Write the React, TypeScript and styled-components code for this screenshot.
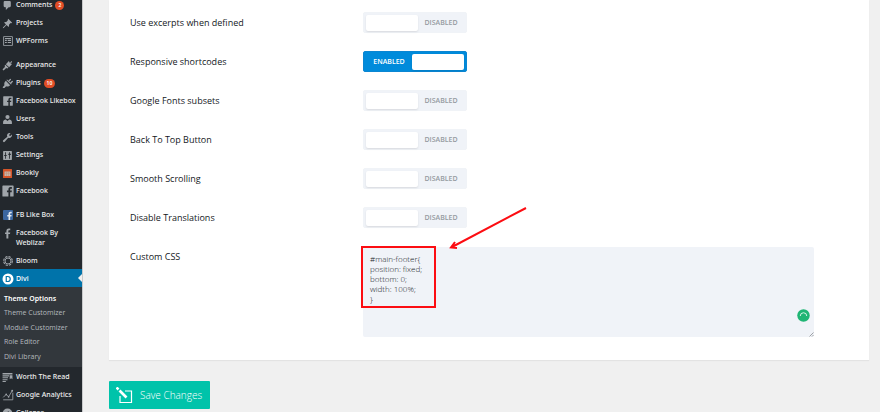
import React from "react";
import styled, { createGlobalStyle, css } from "styled-components";

const Global = createGlobalStyle`
  *, *::before, *::after { box-sizing: border-box; }
  body { margin: 0; background: #f0f0f0; font-family: "Open Sans", "Noto Sans", sans-serif; overflow: hidden; }
  button, textarea { font-family: inherit; }
`;

const Shell = styled.div`
  display: flex;
  height: 100vh;
  overflow: hidden;
`;

const Sidebar = styled.nav`
  flex: 0 0 83px;
  background: #23282d;
  border-right: 1px solid #c9cacb;
  overflow: hidden;
`;

const Menu = styled.ul`
  list-style: none;
  margin: -5px 0 0;
  padding: 0;
`;

const MenuItem = styled.li<{ $gap?: number }>`
  margin-top: ${(p) => p.$gap ?? 0}px;
`;

const MenuLink = styled.a<{ $active?: boolean }>`
  position: relative;
  display: flex;
  align-items: flex-start;
  gap: 2px;
  min-height: 18px;
  padding: 5px 0 3px 1px;
  font-family: "Noto Sans", sans-serif;
  font-size: 7px;
  line-height: 10px;
  font-weight: 500;
  white-space: nowrap;
  text-decoration: none;
  color: #eee;
  ${(p) =>
    p.$active &&
    css`
      background: #0073aa;
      color: #fff;
      &::after {
        content: "";
        position: absolute;
        right: 0;
        top: 5px;
        border: 4px solid transparent;
        border-left: 0;
        border-right-color: #f0f0f0;
      }
    `}
`;

const IconBox = styled.span`
  flex: 0 0 13px;
  min-width: 0;
  height: 10px;
  display: flex;
  align-items: center;
  justify-content: center;
  color: #a0a5aa;
  svg { flex: none; }
`;

const Label = styled.span<{ $wrap?: boolean }>`
  ${(p) => p.$wrap && css`white-space: normal; width: 50px;`}
`;

const Badge = styled.span`
  align-self: center;
  display: flex;
  align-items: center;
  justify-content: center;
  min-width: 9px;
  height: 9px;
  margin-left: 1px;
  padding: 0 3px;
  border-radius: 5px;
  background: #e14d26;
  color: #fff;
  font-size: 5px;
  line-height: 9px;
  font-weight: 600;
`;

const SubMenu = styled.ul`
  list-style: none;
  margin: 0;
  padding: 5px 0 3px 4px;
  height: 80px;
  background: #32373c;
  display: grid;
  grid-template-rows: repeat(5, 1fr);
`;

const SubLink = styled.a<{ $current?: boolean }>`
  display: block;
  font-family: ${(p) => (p.$current ? '"Noto Sans"' : '"Open Sans"')}, sans-serif;
  font-size: 7px;
  line-height: 14px;
  white-space: nowrap;
  text-decoration: none;
  color: ${(p) => (p.$current ? "#fff" : "#b4b9be")};
  font-weight: ${(p) => (p.$current ? 600 : 400)};
`;

const Main = styled.main`
  flex: 1;
  min-width: 0;
  padding: 0 11px 0 26px;
`;

const Panel = styled.section`
  background: #fff;
  padding: 3px 55px 23px 21px;
  box-shadow: 0 1px 1px #e3e3e3;
`;

const Field = styled.div`
  display: grid;
  grid-template-columns: 233px 1fr;
  height: 39px;
  align-items: center;
`;

const AreaField = styled(Field)`
  height: auto;
  align-items: start;
  padding-top: 10px;
`;

const FieldLabel = styled.label`
  font-size: 9px;
  line-height: 20px;
  font-weight: 500;
  color: #14181d;
`;

const Toggle = styled.button<{ $on: boolean }>`
  display: flex;
  flex-direction: ${(p) => (p.$on ? "row-reverse" : "row")};
  align-items: center;
  width: 104px;
  height: 21px;
  padding: 2px;
  border: 1px solid ${(p) => (p.$on ? "#0b86d2" : "#f0f3f7")};
  border-radius: 2px;
  background: ${(p) => (p.$on ? "#008bdb" : "#f0f3f8")};
  color: ${(p) => (p.$on ? "#fff" : "#969ba1")};
  font-size: 7px;
  font-weight: 600;
`;

const Knob = styled.span`
  width: 52px;
  height: 16px;
  border-radius: 2px;
  background: #fff;
  box-shadow: 0 1px 2px rgba(0, 0, 0, 0.1);
`;

const ToggleText = styled.span`
  flex: 1;
  text-align: center;
`;

const AreaWrap = styled.div`
  position: relative;
`;

const Area = styled.textarea`
  display: block;
  width: 100%;
  height: 90px;
  padding: 7px;
  border: 0;
  border-radius: 2px;
  outline: 0;
  resize: none;
  background: #f0f3f8;
  color: #14181d;
  font-family: "Open Sans", sans-serif;
  font-size: 8px;
  font-weight: 300;
  line-height: 10px;
`;

const Highlight = styled.div`
  position: absolute;
  left: -2px;
  top: -1px;
  width: 75px;
  height: 62px;
  border: 2px solid #fc0d12;
  pointer-events: none;
`;

const Arrow = styled.svg`
  position: absolute;
  left: 85px;
  top: -42px;
  pointer-events: none;
`;

const Checker = styled.svg`
  position: absolute;
  right: 4px;
  bottom: 15px;
`;

const Grip = styled.svg`
  position: absolute;
  right: 0;
  bottom: 0;
`;

const SaveButton = styled.button`
  display: flex;
  align-items: center;
  gap: 7px;
  height: 28px;
  margin-top: 21px;
  padding: 0 8px 0 7px;
  border: 0;
  border-radius: 1px;
  background: #00c3aa;
  color: #fff;
  font-size: 10px;
  line-height: 14px;
  font-weight: 300;
`;

const S = ({ children, size = 11 }: { children: React.ReactNode; size?: number }) => (
  <svg width={size} height={size} viewBox="0 0 20 20" fill="currentColor" aria-hidden="true">
    {children}
  </svg>
);

const F_PATH = "M17 2H3a1 1 0 0 0-1 1v14a1 1 0 0 0 1 1h7.600v-6.200H8.500V9.400h2.100V7.600c0-2.100 1.300-3.200 3.100-3.200.9 0 1.700.1 1.900.1v2.200h-1.300c-1 0-1.200.5-1.200 1.200v1.500h2.400l-.3 2.400h-2.100V18H17a1 1 0 0 0 1-1V3a1 1 0 0 0-1-1z";

const icons = {
  comments: <S><path d="M5 2h9a2 2 0 0 1 2 2v7a2 2 0 0 1-2 2h-2l-5 5v-5H5a2 2 0 0 1-2-2V4a2 2 0 0 1 2-2z" /></S>,
  pin: <S><path d="M10.400 3l1-1.500 7.100 7.100-1.500 1-1.300-.3-3 3c.5 1.500.2 3-.8 4L8.300 12.700 3 18l-1.500.5L2 17l5.300-5.300L3.700 8.100c1-1 2.500-1.300 4-.8l3-3z" /></S>,
  forms: (
    <S size={12}>
      <path fillRule="evenodd" d="M3 2h14a1 1 0 0 1 1 1v14a1 1 0 0 1-1 1H3a1 1 0 0 1-1-1V3a1 1 0 0 1 1-1zm.5 1.500v13h13v-13zM5 5h10v1.500H5zM5 8h3v2H5zm4.500 0H15v2H9.500zM5 11.500h3v2H5zm4.500 0H15v2H9.500z" />
    </S>
  ),
  brush: <S><path d="M14.500 5.500c.6-1.300 1.700-2.500 2.500-3.500l1.500 1.500c-1 .8-2 1.700-3.300 2.600l3 1-5.200 6-6-5.500L12.500 2zM6.200 8.600l5.600 5.300-2.300 1.600-2-.8c-1.300 1.500-2.700 3-4.300 4.100-1 .6-2.400-.7-1.800-1.800 1-1.700 2.600-3 4-4.300L4.800 10.600z" /></S>,
  plug: <S><path d="M11.500 4.800L14.300 2a1.200 1.200 0 0 1 1.700 1.700l-2.800 2.800 1.800 1.800 2.800-2.800a1.200 1.200 0 0 1 1.700 1.700l-2.800 2.800.8.800-1.200 1.200-8.300-8.300 1.200-1.200zM7 5.200l7.800 7.800c-2 2.500-5 3.200-7.300 2L4.500 18H1.500v-1.500l3-3.500C3.500 10.500 4.500 7.500 7 5.200z" /></S>,
  fbSquare: <S size={12}><path d={F_PATH} /></S>,
  fbLarge: <S size={14}><path d={F_PATH} /></S>,
  users: <S><circle cx="10" cy="5.500" r="3.800" /><path d="M7 10l3 2.500L13 10c2.500.2 5 2 5 4.500V18H2v-3.500C2 12 4.500 10.200 7 10z" /></S>,
  wrench: <S><path d="M16.700 9.300a4.500 4.500 0 0 1-5.400 1L5 17.800a1.900 1.900 0 0 1-2.800-2.800L9.700 8.700a4.600 4.600 0 0 1 5.900-6.500L13 4.900l.4 1.800 1.800.4 2.700-2.700a4.600 4.600 0 0 1-1.200 4.900z" /></S>,
  sliders: <S><path fillRule="evenodd" d="M3 2h14a1 1 0 0 1 1 1v14a1 1 0 0 1-1 1H3a1 1 0 0 1-1-1V3a1 1 0 0 1 1-1zM5.500 4v5H4v2h1.500v5H7v-5h1.500V9H7V4zM13 4v3h-1.500v2H13v7h1.500V9H16V7h-1.500V4z" /></S>,
  calendar: (
    <svg width="9" height="9" viewBox="0 0 18 18" aria-hidden="true">
      <rect width="18" height="18" rx="1" fill="#d4552a" />
      <path d="M3 5h12v9H3z" fill="#c3b5ac" />
      <path d="M3 8.500h12M7 5v9M11 5v9" stroke="#c98a6c" strokeWidth="1" />
    </svg>
  ),
  fbBlue: (
    <svg width="10" height="10" viewBox="0 0 20 20" aria-hidden="true">
      <rect width="20" height="20" rx="2" fill="#3b66a0" />
      <path d="M11 20v-7H8.500v-3H11V8c0-3 1.500-4.500 4-4.500h2.500v3H16c-1.300 0-1.700.6-1.700 1.700V10h3l-.4 3h-2.600v7z" fill="#e2e9f1" />
    </svg>
  ),
  fbGlyph: <S><path d="M8 19v-8H5.500V8H8V6c0-3.200 1.500-5 4.500-5H15v3h-1.800C11.800 4 11.500 4.800 11.500 6v2H15l-.5 3h-3v8z" /></S>,
  bloom: (
    <S size={12}>
      <circle cx="10" cy="10" r="5" fill="none" stroke="currentColor" strokeWidth="1.600" />
      <circle cx="10" cy="10" r="7.200" fill="none" stroke="currentColor" strokeWidth="2" strokeDasharray="3.800 1.850" />
    </S>
  ),
  divi: (
    <svg width="12" height="12" viewBox="0 0 24 24" aria-hidden="true">
      <circle cx="12" cy="12" r="11" fill="#fff" />
      <path d="M8.500 7h3a5 5 0 0 1 0 10h-3z" fill="none" stroke="#0073aa" strokeWidth="2.400" />
    </svg>
  ),
  read: <S><path d="M1 2h18v2.500H1zM1 6h12v2H1zm0 3.500h10v2H1zM1 13h9v1.800H1zm0 3.300h6V18H1zM14 6h5v7l-2.500-1.500L14 13z" /></S>,
  chart: (
    <S size={12}>
      <path d="M2 18h16V6M2 14l5-5 4 4 6-10" fill="none" stroke="currentColor" strokeWidth="1.400" />
      <circle cx="7" cy="9" r="1.400" /><circle cx="11" cy="13" r="1.400" /><circle cx="17" cy="3" r="1.600" />
    </S>
  ),
  collapse: <S><path fillRule="evenodd" d="M10 1a9 9 0 1 1 0 18 9 9 0 0 1 0-18zm2 4.500L6.500 10l5.500 4.500z" /></S>,
};

type Entry = { label: string; icon: keyof typeof icons; gap?: number; badge?: string; active?: boolean; wrap?: boolean };

const entries: Entry[] = [
  { label: "Comments", icon: "comments", badge: "2" },
  { label: "Projects", icon: "pin" },
  { label: "WPForms", icon: "forms" },
  { label: "Appearance", icon: "brush", gap: 6 },
  { label: "Plugins", icon: "plug", badge: "10" },
  { label: "Facebook Likebox", icon: "fbSquare" },
  { label: "Users", icon: "users" },
  { label: "Tools", icon: "wrench" },
  { label: "Settings", icon: "sliders" },
  { label: "Bookly", icon: "calendar" },
  { label: "Facebook", icon: "fbLarge" },
  { label: "FB Like Box", icon: "fbBlue", gap: 6 },
  { label: "Facebook By Weblizar", icon: "fbGlyph", wrap: true },
  { label: "Bloom", icon: "bloom" },
  { label: "Divi", icon: "divi", active: true },
  { label: "Worth The Read", icon: "read" },
  { label: "Google Analytics", icon: "chart" },
  { label: "Collapse", icon: "collapse" },
];

const subEntries = ["Theme Options", "Theme Customizer", "Module Customizer", "Role Editor", "Divi Library"];

const options = [
  { label: "Use excerpts when defined", on: false },
  { label: "Responsive shortcodes", on: true },
  { label: "Google Fonts subsets", on: false },
  { label: "Back To Top Button", on: false },
  { label: "Smooth Scrolling", on: false },
  { label: "Disable Translations", on: false },
];

const customCss = "#main-footer{\nposition: fixed;\nbottom: 0;\nwidth: 100%;\n}";

function OptionRow({ label, initial, id }: { label: string; initial: boolean; id: string }) {
  const [on, setOn] = React.useState(initial);
  return (
    <Field>
      <FieldLabel htmlFor={id}>{label}</FieldLabel>
      <Toggle id={id} type="button" role="switch" aria-checked={on} $on={on} onClick={() => setOn(!on)}>
        <Knob />
        <ToggleText>{on ? "ENABLED" : "DISABLED"}</ToggleText>
      </Toggle>
    </Field>
  );
}

export default function App() {
  return (
    <>
      <Global />
      <Shell>
        <Sidebar>
          <Menu>
            {entries.map((e) => (
              <MenuItem key={e.label} $gap={e.gap}>
                <MenuLink href="#" $active={e.active}>
                  <IconBox>{icons[e.icon]}</IconBox>
                  <Label $wrap={e.wrap}>{e.label}</Label>
                  {e.badge && <Badge>{e.badge}</Badge>}
                </MenuLink>
                {e.active && (
                  <SubMenu>
                    {subEntries.map((s, i) => (
                      <li key={s}>
                        <SubLink href="#" $current={i === 0}>{s}</SubLink>
                      </li>
                    ))}
                  </SubMenu>
                )}
              </MenuItem>
            ))}
          </Menu>
        </Sidebar>
        <Main>
          <Panel>
            {options.map((o, i) => (
              <OptionRow key={o.label} id={`option-${i}`} label={o.label} initial={o.on} />
            ))}
            <AreaField>
              <FieldLabel htmlFor="custom-css">Custom CSS</FieldLabel>
              <AreaWrap>
                <Area id="custom-css" defaultValue={customCss} spellCheck={false} />
                <Highlight />
                <Arrow width="80" height="46" viewBox="0 0 80 46" fill="none" stroke="#fc0d12" strokeWidth="2" aria-hidden="true">
                  <path d="M78 3L4 42M7 37L3 42.500L9 43" />
                </Arrow>
                <Checker width="13" height="13" viewBox="0 0 26 26" aria-hidden="true">
                  <circle cx="13" cy="13" r="12.500" fill="#1fb574" />
                  <path d="M6.500 14a6.500 6.500 0 0 1 13 0" fill="none" stroke="#d5f3e5" strokeWidth="2" />
                </Checker>
                <Grip width="5" height="5" viewBox="0 0 5 5" stroke="#8a8d91" strokeWidth="0.800" aria-hidden="true">
                  <path d="M0.500 4.500l4-4M3 4.500L4.500 3" />
                </Grip>
              </AreaWrap>
            </AreaField>
          </Panel>
          <SaveButton type="button">
            <svg width="17" height="17" viewBox="0 0 17 17" fill="none" stroke="#fff" aria-hidden="true">
              <path d="M9 4h6.500v11.500h-11.500V9" strokeWidth="1.200" />
              <path d="M3.500 3.500l7 7" strokeWidth="2.600" />
              <path d="M0.500 0.500l2 2" strokeWidth="2.600" />
            </svg>
            Save Changes
          </SaveButton>
        </Main>
      </Shell>
    </>
  );
}
